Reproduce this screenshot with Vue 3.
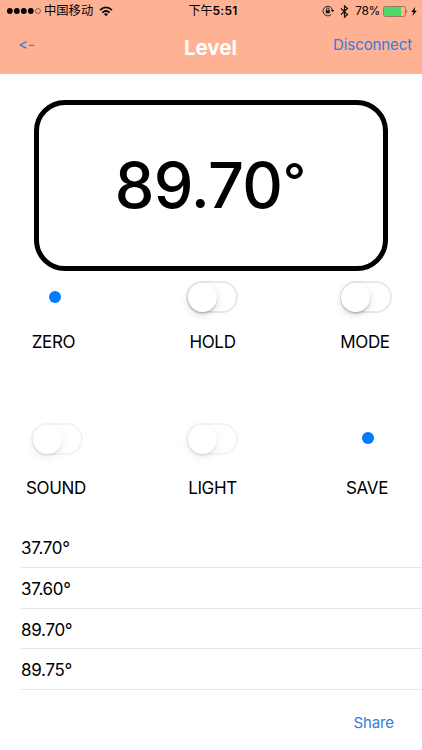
<script setup>
import { ref, reactive } from 'vue'

const angle = ref('89.70')

const controls = reactive([
  { label: 'ZERO', type: 'dot' },
  { label: 'HOLD', type: 'switch' },
  { label: 'MODE', type: 'switch' },
  { label: 'SOUND', type: 'switch', disabled: true },
  { label: 'LIGHT', type: 'switch', disabled: true },
  { label: 'SAVE', type: 'dot' }
])

const records = ref(['37.70', '37.60', '89.70', '89.75'])

function toggle(item) {
  if (item.disabled) return
  if (item.type === 'switch') {
    item.on = !item.on
  } else if (item.label === 'SAVE') {
    records.value.push(angle.value)
  }
}
</script>

<template>
  <div class="page">
    <header class="header">
      <div class="status">
        <div class="left">
          <svg class="signal" width="36" height="8" viewBox="0 0 36 8">
            <circle v-for="n in 4" :key="n" :cx="n * 7 - 4.2" cy="4" r="2.9" />
            <circle cx="31" cy="4" r="2.5" fill="none" stroke="#3a2a22" stroke-width="0.6" />
          </svg>
          <span class="carrier">中国移动</span>
          <svg class="wifi" width="14" height="11" viewBox="0 0 14 11" fill="none" stroke="#000" stroke-width="1.7">
            <path d="M1 4.1Q7 -1.3 13 4.1" />
            <path d="M3.3 6.6Q7 3.4 10.7 6.6" />
            <path d="M7 10.2L4.9 8Q7 6.4 9.1 8Z" fill="#000" stroke="none" />
          </svg>
        </div>
        <div class="time">下午<b>5:51</b></div>
        <div class="right">
          <svg class="lock" width="13" height="12" viewBox="0 0 13 12" fill="none" stroke="#111" stroke-width="0.9">
            <path d="M9.2 9.5A4.8 4.8 0 1 1 10.5 5" />
            <path d="M8.8 4.9h3.6l-1.8 2.3z" fill="#111" stroke="none" />
            <rect x="3.8" y="5.2" width="4" height="3.1" fill="#111" stroke="none" />
            <path d="M4.5 5.5V4.2a1.3 1.3 0 0 1 2.6 0v1.3" />
          </svg>
          <svg class="bluetooth" width="9" height="13" viewBox="0 0 9 13" fill="none" stroke="#111" stroke-width="1.2">
            <path d="M1 3.5l6.5 6L4.5 12.2V.8l3 2.7-6.5 6" />
          </svg>
          <span class="percent">78%</span>
          <svg class="battery" width="26" height="11" viewBox="0 0 26 11">
            <rect x=".5" y=".5" width="22" height="10" rx="2" fill="none" stroke="#76604f" stroke-width=".7" />
            <path d="M2 1h16v9H2a1 1 0 0 1-1-1V2a1 1 0 0 1 1-1z" fill="#4cd964" />
            <path d="M23.7 3.8q1.2 1.7 0 3.4z" fill="#222" />
          </svg>
          <svg class="bolt" width="6" height="9" viewBox="0 0 6 9">
            <path d="M4.3 0L.2 5h2.3L1.4 9 5.8 3.7H3.4z" />
          </svg>
        </div>
      </div>
      <nav class="nav">
        <a class="back">&lt;-</a>
        <h1 class="title">Level</h1>
        <a class="disconnect">Disconnect</a>
      </nav>
    </header>

    <div class="display">{{ angle }}<span class="degree">°</span></div>

    <div class="controls">
      <div v-for="item in controls" :key="item.label" class="control" :class="item.label.toLowerCase()" @click="toggle(item)">
        <div class="holder">
          <i v-if="item.type === 'dot'" class="dot"></i>
          <span v-else class="switch" :class="{ disabled: item.disabled, on: item.on }"><i class="knob"></i></span>
        </div>
        <span class="label">{{ item.label }}</span>
      </div>
    </div>

    <ul class="records">
      <li v-for="(item, i) in records" :key="i">{{ item }}°</li>
    </ul>

    <footer class="footer">
      <a class="share">Share</a>
    </footer>
  </div>
</template>

<style>
body {
  background: #fff;
}
</style>

<style scoped>
.page {
  box-sizing: border-box;
  width: 422px;
  height: 750px;
  overflow: hidden;
  display: flex;
  flex-direction: column;
  color: #000;
  font-family: Inter, "Noto Sans CJK SC", sans-serif;
  font-feature-settings: "calt" 0;
}

.header {
  height: 74px;
  flex: none;
  background: #ffb193;
}

.status {
  height: 22px;
  display: grid;
  grid-template-columns: 1fr auto 1fr;
  align-items: center;
  font-size: 12px;
  line-height: 22px;
}

.left,
.right {
  display: flex;
  align-items: center;
}

.left {
  padding-left: 7px;
}

.carrier {
  margin-left: 1px;
  font-size: 12.3px;
}

.wifi {
  margin-left: 6px;
}

.time {
  padding-left: 4px;
}

.time b {
  font-weight: 600;
  letter-spacing: 0.3px;
}

.right {
  justify-content: flex-end;
  padding-right: 5px;
}

.bluetooth {
  margin-left: 5px;
}

.percent {
  margin-left: 6px;
  letter-spacing: -0.4px;
}

.battery {
  margin-left: 3px;
}

.bolt {
  margin-left: 2px;
}

.nav {
  height: 52px;
  display: grid;
  grid-template-columns: 1fr auto 1fr;
  align-items: center;
  padding: 0 10px 0 18px;
}

.back,
.disconnect,
.share {
  color: #2f7de0;
  font-size: 15px;
}

.back,
.disconnect {
  padding-bottom: 7px;
}

.disconnect {
  text-align: right;
  letter-spacing: -0.1px;
}

.title {
  margin: 0;
  padding: 0 9px 2px 0;
  color: #fff;
  font-size: 20.5px;
  font-weight: 700;
}

.display {
  box-sizing: border-box;
  flex: none;
  width: 354px;
  height: 171px;
  margin: 26px 0 0 34px;
  padding-right: 2px;
  border: 5px solid #000;
  border-radius: 31px;
  font-size: 63px;
  font-weight: 500;
  letter-spacing: -0.8px;
  line-height: 161px;
  text-align: center;
}

.degree {
  display: inline-block;
  margin-left: 1px;
  font-size: 50px;
  line-height: 1;
  vertical-align: 9px;
}

.controls {
  flex: none;
  display: grid;
  grid-template-columns: 114px 196px 111px;
  grid-template-rows: 142px 104px;
  padding-top: 10px;
}

.control {
  display: flex;
  flex-direction: column;
  align-items: center;
}

.holder {
  height: 32px;
  display: flex;
  align-items: center;
}

.label {
  margin-top: 18px;
  font-size: 17px;
  letter-spacing: -0.35px;
  line-height: 22px;
}

.zero {
  padding-right: 5px;
}

.save {
  padding-left: 4px;
}

.sound .label,
.light .label,
.save .label {
  margin-top: 22px;
}

.save .holder {
  height: 30px;
  padding-bottom: 2px;
}

.zero .label {
  padding-right: 2px;
}

.hold .label,
.light .label {
  padding-left: 1px;
}

.mode .label,
.save .label {
  padding-right: 1px;
}

.sound .label {
  padding-right: 2px;
}

.dot {
  width: 12px;
  height: 12px;
  border-radius: 50%;
  background: #007aff;
}

.switch {
  box-sizing: border-box;
  width: 52px;
  height: 32px;
  border: 2px solid #e8e8e8;
  border-radius: 16px;
  display: flex;
}

.knob {
  width: 29px;
  height: 29px;
  margin: -0.5px 0 0 -0.5px;
  border-radius: 50%;
  background: #fff;
  box-shadow: 0 2px 2px rgba(0, 0, 0, 0.16), 0 3px 8px rgba(0, 0, 0, 0.12);
}

.on {
  justify-content: flex-end;
  border-color: #4cd964;
  background: #4cd964;
}

.disabled {
  opacity: 0.5;
}

.records {
  flex: none;
  margin: 0;
  padding: 0 0 0 21px;
  list-style: none;
}

.records li {
  box-sizing: border-box;
  height: 40.75px;
  border-bottom: 1px solid #e6e6e8;
  font-size: 17px;
  letter-spacing: -0.3px;
  line-height: 42px;
}

.footer {
  display: flex;
  justify-content: flex-end;
  padding: 23px 28px 0 0;
}

.share {
  letter-spacing: -0.1px;
}
</style>
